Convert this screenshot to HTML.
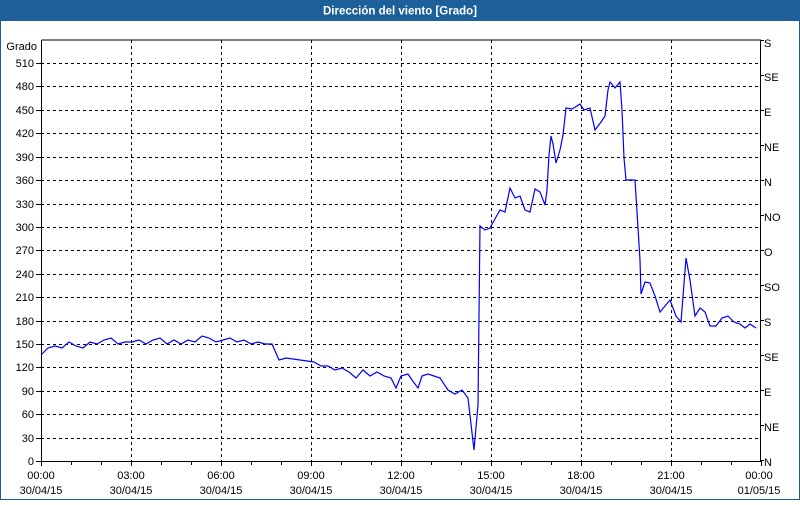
<!DOCTYPE html>
<html><head><meta charset="utf-8"><style>
body{margin:0;width:800px;height:500px;overflow:hidden;background:#fff;font-family:"Liberation Sans",sans-serif}
</style></head><body>
<svg width="800" height="500" xmlns="http://www.w3.org/2000/svg" font-family="Liberation Sans, sans-serif" font-size="11">
<rect x="0" y="0" width="800" height="500" fill="#fff"/>
<rect x="0" y="0" width="800" height="21" fill="#1d5f98"/>
<rect x="0.5" y="0.5" width="799" height="499" fill="none" stroke="#1d5f98"/>
<text x="400" y="14.5" fill="#fff" font-weight="bold" text-anchor="middle" font-size="11.5">Dirección del viento [Grado]</text>
<g stroke="#000" stroke-dasharray="3,3" stroke-width="1">
<path d="M41 63.5H760M41 86.5H760M41 110.5H760M41 133.5H760M41 157.5H760M41 180.5H760M41 204.5H760M41 227.5H760M41 250.5H760M41 274.5H760M41 297.5H760M41 321.5H760M41 344.5H760M41 367.5H760M41 391.5H760M41 414.5H760M41 438.5H760"/>
<path d="M131.5 40V461M221.5 40V461M311.5 40V461M401.5 40V461M491.5 40V461M581.5 40V461M671.5 40V461"/>
</g>
<path d="M41.5 40V461.5H760.5V40H41.5" fill="none" stroke="#000"/>
<path d="M41.5 461v5M71.5 461v4M101.5 461v4M131.5 461v5M161.5 461v4M191.5 461v4M221.5 461v5M251.5 461v4M281.5 461v4M311.5 461v5M341.5 461v4M371.5 461v4M401.5 461v5M431.5 461v4M461.5 461v4M491.5 461v5M521.5 461v4M551.5 461v4M581.5 461v5M611.5 461v4M641.5 461v4M671.5 461v5M701.5 461v4M731.5 461v4M761.5 461v5" stroke="#000"/>
<path d="M36 63.5h5M36 86.5h5M36 110.5h5M36 133.5h5M36 157.5h5M36 180.5h5M36 204.5h5M36 227.5h5M36 250.5h5M36 274.5h5M36 297.5h5M36 321.5h5M36 344.5h5M36 367.5h5M36 391.5h5M36 414.5h5M36 438.5h5M36 461.5h5" stroke="#000"/>
<path d="M760 40.5h4M760 75.5h4M760 110.5h4M760 145.5h4M760 180.5h4M760 215.5h4M760 250.5h4M760 285.5h4M760 320.5h4M760 355.5h4M760 390.5h4M760 425.5h4M760 460.5h4" stroke="#000"/>
<g fill="#000" text-anchor="end">
<text x="37" y="50">Grado</text>
<text x="34" y="67">510</text><text x="34" y="90">480</text><text x="34" y="114">450</text><text x="34" y="137">420</text><text x="34" y="161">390</text><text x="34" y="184">360</text><text x="34" y="208">330</text><text x="34" y="231">300</text><text x="34" y="254">270</text><text x="34" y="278">240</text><text x="34" y="301">210</text><text x="34" y="325">180</text><text x="34" y="348">150</text><text x="34" y="371">120</text><text x="34" y="395">90</text><text x="34" y="418">60</text><text x="34" y="442">30</text><text x="34" y="465">0</text>
</g>
<g fill="#000">
<text x="764" y="47">S</text><text x="764" y="81">SE</text><text x="764" y="116">E</text><text x="764" y="151">NE</text><text x="764" y="186">N</text><text x="764" y="221">NO</text><text x="764" y="256">O</text><text x="764" y="291">SO</text><text x="764" y="326">S</text><text x="764" y="361">SE</text><text x="764" y="396">E</text><text x="764" y="431">NE</text><text x="764" y="466">N</text>
</g>
<g fill="#000" text-anchor="middle">
<text x="41" y="479">00:00</text><text x="41" y="494">30/04/15</text>
<text x="131" y="479">03:00</text><text x="131" y="494">30/04/15</text>
<text x="221" y="479">06:00</text><text x="221" y="494">30/04/15</text>
<text x="311" y="479">09:00</text><text x="311" y="494">30/04/15</text>
<text x="401" y="479">12:00</text><text x="401" y="494">30/04/15</text>
<text x="491" y="479">15:00</text><text x="491" y="494">30/04/15</text>
<text x="581" y="479">18:00</text><text x="581" y="494">30/04/15</text>
<text x="671" y="479">21:00</text><text x="671" y="494">30/04/15</text>
<text x="759" y="479">00:00</text><text x="759" y="494">01/05/15</text>
</g>
<polyline fill="none" stroke="#0000ff" stroke-width="1.2" points="41,355 48,348 55,346 62,348 69,342 76,346 83,348 90,342 97,344 104,340 111,338 118,344 125,342 132,342 139,340 146,344 153,340 160,338 167,344 174,340 181,344 188,340 195,342 202,336 209,338 216,342 223,340 230,338 237,342 244,340 251,344 258,342 265,344 272,344 279,360 286,358 300,360 314,362 321,366 328,366 335,370 342,368 349,372 356,378 363,370 370,376 377,372 384,376 391,378 396,388 401,376 408,374 412,380 418,388 422,376 428,374 434,376 440,378 448,390 455,394 462,390 468,398 474,450 478,405 480,226 485,230 490,228 496,217 500,210 505,212 510,188 515,198 520,196 525,210 530,212 535,189 540,192 545,205 547,190 549,155 551,136 553,144 556,163 560,150 563,135 566,108 572,109 577,106 580,104 584,110 590,108 595,130 601,122 605,116 608,90 610,82 615,88 620,82 622,110 624,158 626,180 630,180 635,180 640,260 641,294 645,282 650,283 655,296 660,312 665,306 670,300 676,316 681,322 686,258 690,280 695,316 700,308 705,312 710,326 716,326 722,318 728,316 734,322 740,324 745,328 750,324 756,328"/>
</svg>
</body></html>
